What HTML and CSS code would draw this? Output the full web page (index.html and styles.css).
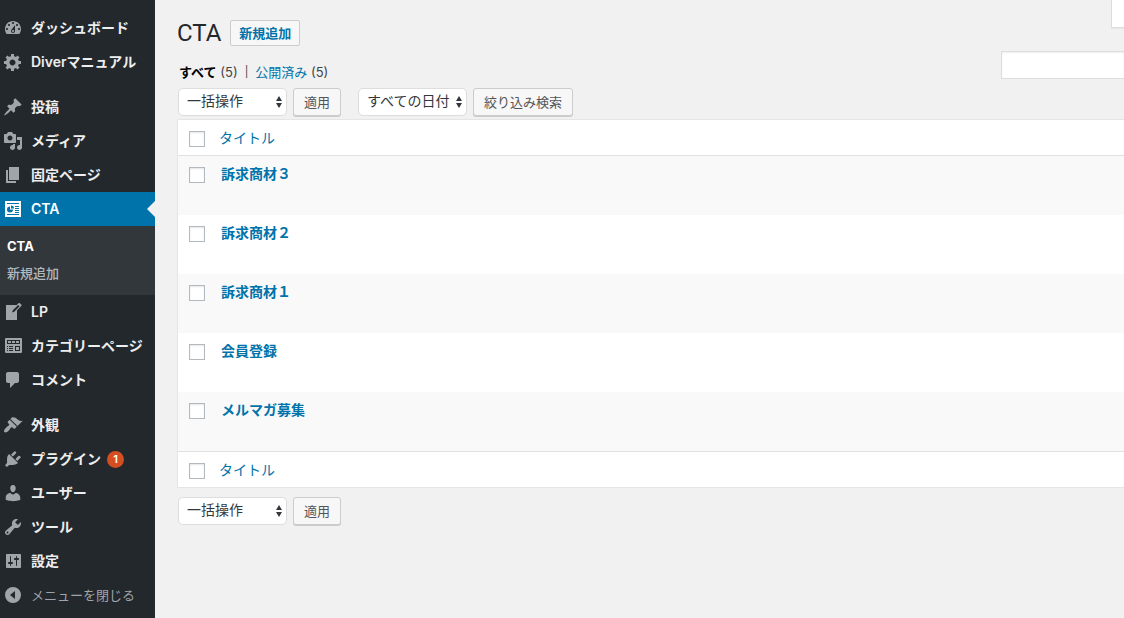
FILE: index.html
```html
<!DOCTYPE html>
<html lang="ja">

<head>
    <meta charset="UTF-8">
    <meta name="viewport" content="width=device-width, initial-scale=1.0">
    <title>CTA</title>
    <link rel="stylesheet" href="styles.css">
</head>

<body>
    <nav class="sidebar">
        <ul class="menu">
            <li>
                <a href="#" class="menu-item">
                    <svg class="icon" viewBox="0 0 20 20"><path fill-rule="evenodd" d="M3.76 16h12.48c1.1-1.37 1.76-3.11 1.76-5 0-4.42-3.58-8-8-8s-8 3.58-8 8c0 1.89.66 3.63 1.76 5zM10 4c.55 0 1 .45 1 1s-.45 1-1 1-1-.45-1-1 .45-1 1-1zM6 6c.55 0 1 .45 1 1s-.45 1-1 1-1-.45-1-1 .45-1 1-1zm8 0c.55 0 1 .45 1 1s-.45 1-1 1-1-.45-1-1 .45-1 1-1zm-5.37 5.55L12 7v6c0 1.1-.9 2-2 2s-2-.9-2-2c0-.57.24-1.08.63-1.45zM4 10c.55 0 1 .45 1 1s-.45 1-1 1-1-.45-1-1 .45-1 1-1zm12 0c.55 0 1 .45 1 1s-.45 1-1 1-1-.45-1-1 .45-1 1-1zm-5 3c0-.55-.45-1-1-1s-1 .45-1 1 .45 1 1 1 1-.45 1-1z"/></svg>
                    <span>ダッシュボード</span>
                </a>
            </li>
            <li>
                <a href="#" class="menu-item">
                    <svg class="icon" viewBox="0 0 20 20"><path d="M18 12h-2.18c-.17.7-.44 1.35-.81 1.93l1.54 1.54-2.1 2.1-1.54-1.54c-.58.36-1.23.63-1.91.79V19H8v-2.18c-.68-.16-1.33-.43-1.91-.79l-1.54 1.54-2.12-2.12 1.54-1.54c-.36-.58-.63-1.23-.79-1.91H1V9.03h2.17c.16-.7.44-1.35.8-1.94L2.43 5.55l2.1-2.1 1.54 1.54c.58-.37 1.24-.64 1.93-.81V2h3v2.18c.68.16 1.33.43 1.91.79l1.54-1.54 2.12 2.12-1.54 1.54c.36.59.64 1.24.8 1.94H18V12zm-8.5 1.5c1.66 0 3-1.34 3-3s-1.34-3-3-3-3 1.34-3 3 1.34 3 3 3z"/></svg>
                    <span>Diverマニュアル</span>
                </a>
            </li>
            <li class="group">
                <a href="#" class="menu-item">
                    <svg class="icon" viewBox="0 0 20 20"><path d="M10.44 3.02l1.82-1.82 6.36 6.35-1.83 1.82c-1.05-.68-2.48-.57-3.41.36l-.75.75c-.92.93-1.04 2.35-.35 3.41l-1.83 1.82-2.41-2.41-2.8 2.79c-.42.42-3.38 2.71-3.8 2.29s1.86-3.39 2.28-3.81l2.79-2.79L4.1 9.36l1.83-1.82c1.05.69 2.48.57 3.4-.36l.75-.75c.93-.92 1.05-2.35.36-3.41z"/></svg>
                    <span>投稿</span>
                </a>
            </li>
            <li>
                <a href="#" class="menu-item">
                    <svg class="icon" viewBox="0 0 20 20"><path d="M13 11V4c0-.55-.45-1-1-1h-1.67L9 1H5L3.67 3H2c-.55 0-1 .45-1 1v7c0 .55.45 1 1 1h10c.55 0 1-.45 1-1zM7 4.5c1.38 0 2.5 1.12 2.5 2.5S8.38 9.5 7 9.5 4.5 8.38 4.5 7 5.62 4.5 7 4.5zM14 6h5v10.5c0 1.38-1.12 2.5-2.5 2.5S14 17.88 14 16.5s1.12-2.5 2.5-2.5c.17 0 .34.02.5.05V9h-3V6zm-4 8.05V13h2v3.5c0 1.38-1.12 2.5-2.5 2.5S7 17.88 7 16.5 8.12 14 9.5 14c.17 0 .34.02.5.05z"/></svg>
                    <span>メディア</span>
                </a>
            </li>
            <li>
                <a href="#" class="menu-item">
                    <svg class="icon" viewBox="0 0 20 20"><path d="M6 15V2h10v13H6zm-1 1h8v2H3V5h2v11z"/></svg>
                    <span>固定ページ</span>
                </a>
            </li>
            <li>
                <a href="#" class="menu-item current">
                    <svg class="icon" viewBox="0 0 20 20"><path fill-rule="evenodd" d="M2 2h16v16H2zM4 4v1h12V4zM4 15v1h12v-1zM12 7v1h4V7zM12 9v1h4V9zM12 11v1h4v-1zM12 13v1h4v-1zM7 7.500a3 3 0 1 0 3 3H7zM8 6.500v3h3a3 3 0 0 0-3-3z"/></svg>
                    <span>CTA</span>
                </a>
                <ul class="submenu">
                    <li><a href="#" class="active">CTA</a></li>
                    <li><a href="#">新規追加</a></li>
                </ul>
            </li>
            <li>
                <a href="#" class="menu-item">
                    <svg class="icon" viewBox="0 0 20 20"><path d="M16.89 1.2l1.41 1.41c.39.39.39 1.02 0 1.41L14 8.330V18H3V3h10.670l1.800-1.800c.4-.39 1.030-.4 1.420 0zm-5.660 8.480l5.370-5.360-1.420-1.420-5.360 5.370-.71 2.120z"/></svg>
                    <span>LP</span>
                </a>
            </li>
            <li>
                <a href="#" class="menu-item">
                    <svg class="icon" viewBox="0 0 20 20"><path fill-rule="evenodd" d="M3 2h15a1 1 0 0 1 1 1v13a1 1 0 0 1-1 1H3a1 1 0 0 1-1-1V3a1 1 0 0 1 1-1zM4 4v4h13V4zM5 5h3v2H5zM9 5h3v2H9zM13 5h3v2h-3zM4 10v1h1v-1zM6 10v1h4v-1zM4 12v1h1v-1zM6 12v1h4v-1zM4 14v1h1v-1zM6 14v1h4v-1zM12 10v5h5v-5zM13 11h3v3h-3z"/></svg>
                    <span>カテゴリーページ</span>
                </a>
            </li>
            <li>
                <a href="#" class="menu-item">
                    <svg class="icon" viewBox="0 0 20 20"><path d="M5 2h9c1.1 0 2 .9 2 2v7c0 1.1-.9 2-2 2h-2l-5 5v-5H5c-1.1 0-2-.9-2-2V4c0-1.1.9-2 2-2z"/></svg>
                    <span>コメント</span>
                </a>
            </li>
            <li class="group">
                <a href="#" class="menu-item">
                    <svg class="icon" viewBox="0 0 20 20"><path d="M14.48 11.06L7.41 3.99l1.5-1.5c.5-.56 2.3-.47 3.51.32 1.21.8 1.43 1.28 2.91 2.1 1.18.64 2.45 1.26 4.45.85zm-.71.71L6.7 4.7 4.93 6.47c-.39.39-.39 1.02 0 1.41l1.06 1.06c.39.39.39 1.03 0 1.42-.6.6-1.43 1.11-2.21 1.69-.35.26-.7.53-1.01.84C1.43 14.23.4 16.08 1.4 17.07c.99 1 2.84-.03 4.18-1.36.31-.31.58-.66.85-1.02.57-.78 1.08-1.61 1.69-2.21.39-.39 1.02-.39 1.41 0l1.06 1.06c.39.39 1.02.39 1.41 0z"/></svg>
                    <span>外観</span>
                </a>
            </li>
            <li>
                <a href="#" class="menu-item">
                    <svg class="icon" viewBox="0 0 20 20"><path d="M13.11 4.36L9.87 7.6 8 5.73l3.24-3.24c.35-.34 1.05-.2 1.56.32.52.51.66 1.21.31 1.55zm-8 1.77l.91-1.12 9.01 9.01-1.19.84c-.71.71-2.63 1.16-3.82 1.16H6.14L4.9 17.26c-.59.59-1.54.59-2.12 0-.59-.58-.59-1.53 0-2.12l1.24-1.24v-3.88c0-1.13.4-3.19 1.09-3.89zm7.26 3.97l3.24-3.24c.34-.35 1.04-.21 1.55.31.52.51.66 1.21.31 1.55l-3.24 3.25z"/></svg>
                    <span>プラグイン</span>
                    <span class="badge">1</span>
                </a>
            </li>
            <li>
                <a href="#" class="menu-item">
                    <svg class="icon" viewBox="0 0 20 20"><path d="M10 9.25c-2.27 0-2.73-3.44-2.73-3.44C7 4.02 7.82 2 9.97 2c2.16 0 2.98 2.02 2.71 3.81 0 0-.41 3.44-2.68 3.44zm0 2.57L12.72 10c2.39 0 4.52 2.33 4.52 4.53v2.49s-3.65 1.13-7.24 1.13c-3.65 0-7.24-1.13-7.24-1.13v-2.49c0-2.25 1.94-4.48 4.47-4.48z"/></svg>
                    <span>ユーザー</span>
                </a>
            </li>
            <li>
                <a href="#" class="menu-item">
                    <svg class="icon" viewBox="0 0 20 20"><path fill-rule="evenodd" d="M16.68 9.77c-1.34 1.34-3.3 1.67-4.95.99l-5.41 6.52c-.99.99-2.59.99-3.58 0s-.99-2.59 0-3.57l6.52-5.42c-.68-1.65-.35-3.61.99-4.95 1.28-1.28 3.12-1.62 4.72-1.06l-2.89 2.89 2.82 2.82 2.86-2.87c.53 1.58.18 3.39-1.08 4.65zM3.81 16.21c.4.39 1.04.39 1.43 0 .4-.4.4-1.04 0-1.43-.39-.4-1.03-.4-1.43 0-.39.39-.39 1.03 0 1.43z"/></svg>
                    <span>ツール</span>
                </a>
            </li>
            <li>
                <a href="#" class="menu-item">
                    <svg class="icon" viewBox="0 0 20 20"><path fill-rule="evenodd" d="M18 16V4c0-.55-.45-1-1-1H4c-.55 0-1 .45-1 1v12c0 .55.45 1 1 1h13c.55 0 1-.45 1-1zM8 11h1c.55 0 1 .45 1 1s-.45 1-1 1H8v1.500c0 .28-.22.5-.5.5s-.5-.22-.5-.5V13H6c-.55 0-1-.45-1-1s.45-1 1-1h1V5.500c0-.28.22-.5.5-.5s.5.22.5.5V11zm5-2h-1c-.55 0-1-.45-1-1s.45-1 1-1h1V5.500c0-.28.22-.5.5-.5s.5.22.5.5V7h1c.55 0 1 .45 1 1s-.45 1-1 1h-1v5.500c0 .28-.22.5-.5.5s-.5-.22-.5-.5V9z"/></svg>
                    <span>設定</span>
                </a>
            </li>
            <li>
                <button type="button" class="menu-item collapse">
                    <svg class="icon" viewBox="0 0 20 20"><path fill-rule="evenodd" d="M10 2a8 8 0 1 0 0 16 8 8 0 0 0 0-16zM12 6v8l-5-4z"/></svg>
                    <span>メニューを閉じる</span>
                </button>
            </li>
        </ul>
    </nav>

    <main class="content">
        <div class="title-row">
            <h1>CTA</h1>
            <a href="#" class="add-new">新規追加</a>
            <button type="button" class="screen-tab" aria-label="表示オプション"></button>
        </div>

        <div class="filter-row">
            <ul class="views">
                <li><a href="#" class="view-current">すべて</a> (5)</li>
                <li class="divider">|</li>
                <li><a href="#">公開済み</a> (5)</li>
            </ul>
            <input type="search" class="search" aria-label="検索">
        </div>

        <div class="tablenav">
            <div class="select-box">
                <select aria-label="一括操作">
                    <option>一括操作</option>
                </select>
                <svg class="arrows" viewBox="0 0 8 14"><path d="M4 1l3 5H1zM4 13l3-5H1z"/></svg>
            </div>
            <button type="button" class="button">適用</button>
            <div class="select-box dates">
                <select aria-label="日付で絞り込む">
                    <option>すべての日付</option>
                </select>
                <svg class="arrows" viewBox="0 0 8 14"><path d="M4 1l3 5H1zM4 13l3-5H1z"/></svg>
            </div>
            <button type="button" class="button">絞り込み検索</button>
        </div>

        <table class="posts">
            <thead>
                <tr>
                    <th class="check"><input type="checkbox" aria-label="すべて選択"></th>
                    <th><a href="#">タイトル</a></th>
                </tr>
            </thead>
            <tbody>
                <tr>
                    <td class="check"><input type="checkbox" aria-label="訴求商材3を選択"></td>
                    <td><a href="#">訴求商材３</a></td>
                </tr>
                <tr>
                    <td class="check"><input type="checkbox" aria-label="訴求商材2を選択"></td>
                    <td><a href="#">訴求商材２</a></td>
                </tr>
                <tr>
                    <td class="check"><input type="checkbox" aria-label="訴求商材1を選択"></td>
                    <td><a href="#">訴求商材１</a></td>
                </tr>
                <tr>
                    <td class="check"><input type="checkbox" aria-label="会員登録を選択"></td>
                    <td><a href="#">会員登録</a></td>
                </tr>
                <tr>
                    <td class="check"><input type="checkbox" aria-label="メルマガ募集を選択"></td>
                    <td><a href="#">メルマガ募集</a></td>
                </tr>
            </tbody>
            <tfoot>
                <tr>
                    <th class="check"><input type="checkbox" aria-label="すべて選択"></th>
                    <th><a href="#">タイトル</a></th>
                </tr>
            </tfoot>
        </table>

        <div class="tablenav bottom">
            <div class="select-box">
                <select aria-label="一括操作">
                    <option>一括操作</option>
                </select>
                <svg class="arrows" viewBox="0 0 8 14"><path d="M4 1l3 5H1zM4 13l3-5H1z"/></svg>
            </div>
            <button type="button" class="button">適用</button>
        </div>
    </main>
</body>

</html>
```
FILE: styles.css
```css
* {
    box-sizing: border-box;
}

body {
    margin: 0;
    display: flex;
    min-height: 100vh;
    background: #f1f1f1;
    color: #444;
    font-family: Inter, "Noto Sans CJK JP", sans-serif;
    font-size: 13px;
    line-height: 20px;
    overflow-x: hidden;
}

ul {
    list-style: none;
    margin: 0;
    padding: 0;
}

a {
    color: #0073aa;
    text-decoration: none;
}

button,
input,
select {
    font-family: inherit;
    margin: 0;
}

/* sidebar */
.sidebar {
    flex: 0 0 155px;
    background: #23282d;
}

.menu {
    padding: 11px 0 0;
}

.group {
    margin-top: 11px;
}

.menu-item {
    position: relative;
    display: flex;
    align-items: center;
    width: 100%;
    height: 34px;
    padding: 0 0 0 3px;
    border: none;
    background: none;
    color: #eee;
    font-size: 14px;
    font-weight: 600;
    line-height: 20px;
    white-space: nowrap;
}

.icon {
    flex: none;
    width: 20px;
    height: 20px;
    margin-right: 8px;
    fill: #a0a5aa;
}

.current {
    background: #0073aa;
    color: #fff;
}

.current .icon {
    fill: #fff;
}

.current::after {
    content: "";
    position: absolute;
    right: 0;
    top: 9px;
    border: 8px solid transparent;
    border-left: none;
    border-right-color: #f1f1f1;
}

.badge {
    width: 17px;
    height: 17px;
    margin-left: 6px;
    border-radius: 50%;
    background: #d54e21;
    color: #fff;
    font-size: 11px;
    line-height: 17px;
    text-align: center;
}

.submenu {
    padding: 7px 0 8px;
    background: #32373c;
}

.submenu a {
    display: block;
    height: 27px;
    padding-left: 7px;
    color: #b4b9be;
    font-weight: 500;
    line-height: 27px;
}

.submenu .active {
    color: #fff;
    font-weight: 700;
}

.collapse {
    color: #a0a5aa;
    font-size: 13px;
    font-weight: 400;
    cursor: pointer;
}

/* content */
.content {
    flex: 1;
    min-width: 0;
    padding-left: 22px;
}

.title-row {
    display: flex;
    align-items: flex-start;
    height: 51px;
}

h1 {
    margin: 20px 9px 0 0;
    color: #23282d;
    font-family: Roboto, "Noto Sans CJK JP", sans-serif;
    font-size: 24px;
    font-weight: 400;
    line-height: 26px;
}

.add-new {
    height: 26px;
    margin-top: 20px;
    padding: 0 8px;
    border: 1px solid #ccc;
    border-radius: 2px;
    background: #f7f7f7;
    font-weight: 600;
    line-height: 24px;
}

.screen-tab {
    width: 14px;
    height: 28px;
    margin: 0 -1px 0 auto;
    padding: 0;
    border: 1px solid #ddd;
    border-top: none;
    background: #fff;
    box-shadow: 0 1px 1px rgba(0, 0, 0, 0.04);
}

.filter-row {
    display: flex;
    justify-content: space-between;
    align-items: flex-end;
}

.views {
    display: flex;
    gap: 7px;
    padding-left: 2px;
    line-height: 14px;
}

.view-current {
    color: #000;
    font-weight: 600;
}

.divider {
    font-size: 11px;
}

.search {
    width: 124px;
    height: 28px;
    margin-right: -1px;
    border: 1px solid #ddd;
    border-radius: 0;
    background: #fff;
    box-shadow: inset 0 1px 2px rgba(0, 0, 0, 0.07);
    appearance: none;
}

.tablenav {
    display: flex;
    gap: 6px;
    padding: 9px 0 3px 1px;
}

.select-box {
    position: relative;
    width: 109px;
    height: 28px;
}

.dates {
    margin-left: 11px;
}

.select-box select {
    width: 100%;
    height: 28px;
    padding: 0 0 4px 8px;
    border: 1px solid #ddd;
    border-radius: 5px;
    background: #fff;
    color: #32373c;
    font-size: 14px;
    appearance: none;
}

.arrows {
    position: absolute;
    right: 4px;
    top: 7px;
    width: 8px;
    height: 14px;
    fill: #32373c;
    pointer-events: none;
}

.button {
    height: 28px;
    padding: 0 10px;
    border: 1px solid #ccc;
    border-radius: 3px;
    background: #f7f7f7;
    box-shadow: 0 1px 0 #ccc;
    color: #555;
    font-size: 13px;
    line-height: 26px;
}

.posts {
    width: calc(100% + 1px);
    border: 1px solid #e5e5e5;
    border-spacing: 0;
    background: #fff;
    font-size: 14px;
}

.posts th,
.posts td {
    text-align: left;
    vertical-align: top;
}

.posts th {
    height: 36px;
    padding: 8px 10px 0 6px;
    font-weight: 400;
}

.posts td {
    height: 59px;
    padding: 8px 10px 0 8px;
    font-weight: 600;
}

.posts thead th {
    border-bottom: 1px solid #e1e1e1;
}

.posts tfoot th {
    border-top: 1px solid #e1e1e1;
}

.posts tbody tr:nth-child(odd) {
    background: #f9f9f9;
}

.posts .check {
    width: 35px;
    padding: 11px 0 0 11px;
}

.posts input {
    display: block;
    width: 16px;
    height: 16px;
    border: 1px solid #b4b9be;
    background: #fff;
    box-shadow: inset 0 1px 2px rgba(0, 0, 0, 0.1);
    appearance: none;
}
```
